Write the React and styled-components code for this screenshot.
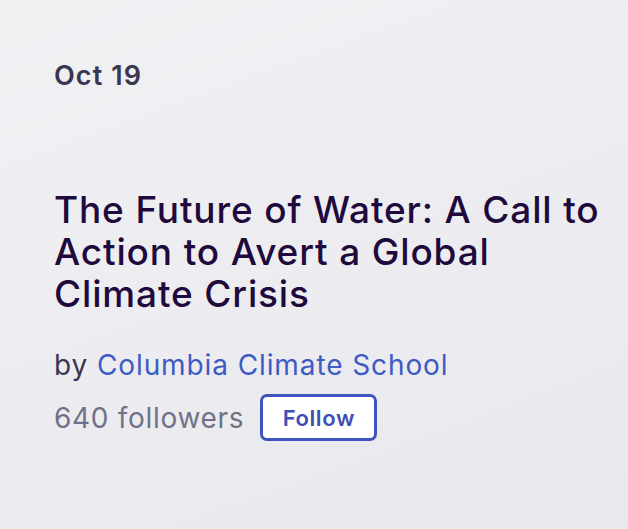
import React from "react";
import styled, { createGlobalStyle } from "styled-components";

const GlobalStyle = createGlobalStyle`
  html, body {
    margin: 0;
    padding: 0;
  }
  body {
    background: linear-gradient(160deg, #f1f1f4 0%, #ececf0 60%, #e8e9ed 100%);
    font-family: Inter, "Noto Sans", sans-serif;
    min-height: 529px;
  }
`

const Card = styled.main`
  width: 628px;
  height: 529px;
  box-sizing: border-box;
  padding: 60px 14px 0 54px;
  display: flex;
  flex-direction: column;
`

const DateLabel = styled.div`
  font-size: 27px;
  font-weight: 600;
  color: #39364f;
  line-height: 32px;
  letter-spacing: 1.1px;
`

const Title = styled.h1`
  margin: 97px 0 0;
  font-size: 37px;
  font-weight: 500;
  line-height: 42px;
  color: #1e0a3c;
  letter-spacing: 0.85px;
`

const Byline = styled.div`
  margin-top: 32px;
  font-size: 28px;
  line-height: 36px;
  color: #39364f;
  letter-spacing: 0.9px;
`

const Organizer = styled.a`
  color: #3d5bc4;
  text-decoration: none;
`

const FollowRow = styled.div`
  margin-top: 11px;
  display: flex;
  align-items: center;
  gap: 16px;
`

const Followers = styled.span`
  font-size: 28px;
  color: #6f7287;
  letter-spacing: 0.7px;
`

const FollowButton = styled.button`
  width: 117px;
  height: 47px;
  box-sizing: border-box;
  border: 3px solid #3d54c0;
  border-radius: 7px;
  background: #fff;
  color: #3d4fb4;
  font-family: Inter, "Noto Sans", sans-serif;
  font-size: 22px;
  font-weight: 600;
  letter-spacing: 0.6px;
  cursor: pointer;
`

export default function App() {
  return (
    <>
      <GlobalStyle />
      <Card>
        <DateLabel>Oct 19</DateLabel>
        <Title>
          The Future of Water: A Call to Action to Avert a Global Climate Crisis
        </Title>
        <Byline>
          by <Organizer href="#">Columbia Climate School</Organizer>
        </Byline>
        <FollowRow>
          <Followers>640 followers</Followers>
          <FollowButton>Follow</FollowButton>
        </FollowRow>
      </Card>
    </>
  );
}
